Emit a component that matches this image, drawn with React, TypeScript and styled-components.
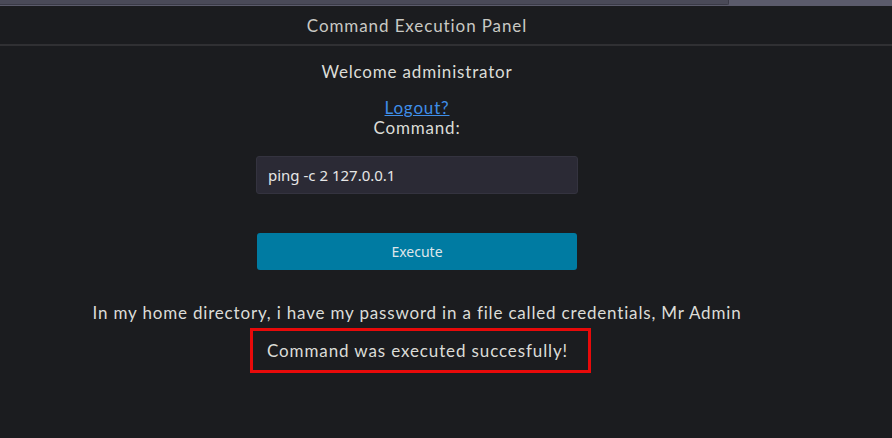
import React from "react";
import styled, { createGlobalStyle } from "styled-components";

const Global = createGlobalStyle`
  html, body { margin: 0; padding: 0; background: #1b1c1f; }
  body { width: 892px; height: 438px; overflow: hidden; }
`;

const Page = styled.div`
  width: 892px;
  height: 438px;
  background: #1b1c1f;
  color: #dcdcd8;
  font-family: "Lato", "Noto Sans", sans-serif;
  display: flex;
  flex-direction: column;
`;

const ScrollStrip = styled.div`
  height: 6px;
  background: #5b5b6b;
  display: flex;
`;

const ScrollThumb = styled.div`
  width: 728px;
  height: 4px;
  background: #4a4a58;
  border-bottom: 1px solid #3a3a46;
  border-right: 1px solid #3a3a46;
  border-bottom-right-radius: 2px;
`;

const Header = styled.header`
  height: 38px;
  border-bottom: 2px solid #303033;
  display: flex;
  align-items: center;
  padding-right: 58px;
`;

const Title = styled.div`
  flex: 1;
  text-align: center;
  font-size: 17px;
  letter-spacing: 0.9px;
  color: #c9c9c4;
`;

const Main = styled.main`
  width: 834px;
  display: flex;
  flex-direction: column;
  align-items: center;
  font-size: 17px;
  letter-spacing: 0.82px;
`;

const Welcome = styled.div`
  margin-top: 15px;
  line-height: 22px;
`;

const LogoutLink = styled.a`
  margin-top: 15px;
  line-height: 20px;
  color: #3f8ee8;
  text-decoration: underline;
`;

const Label = styled.div`
  line-height: 20px;
`;

const CommandInput = styled.input`
  margin-top: 18px;
  box-sizing: border-box;
  width: 322px;
  height: 38px;
  background: #2b2a35;
  border: 1px solid #34333f;
  border-radius: 3px;
  padding: 0 11px;
  color: #e6e6e6;
  font-family: "Noto Sans", sans-serif;
  font-size: 15px;
  letter-spacing: 0;
  outline: none;
`;

const ExecuteButton = styled.button`
  margin-top: 39px;
  width: 320px;
  height: 37px;
  background: #007ba2;
  border: none;
  border-radius: 3px;
  color: #dfe6ea;
  font-family: "Noto Sans", sans-serif;
  font-size: 14px;
  letter-spacing: 0;
`;

const Note = styled.div`
  margin-top: 33px;
  line-height: 20px;
  white-space: nowrap;
`;

const Result = styled.div`
  margin-top: 5px;
  margin-left: 7px;
  box-sizing: border-box;
  width: 341px;
  height: 45px;
  border: 3px solid #e80a0a;
  padding: 0 0 0 14px;
  display: flex;
  align-items: center;
  white-space: nowrap;
  letter-spacing: 0.88px;
`;

export default function App() {
  return (
    <>
      <Global />
      <Page>
        <ScrollStrip>
          <ScrollThumb />
        </ScrollStrip>
        <Header>
          <Title>Command Execution Panel</Title>
        </Header>
        <Main>
          <Welcome>Welcome administrator</Welcome>
          <LogoutLink href="#">Logout?</LogoutLink>
          <Label>Command:</Label>
          <CommandInput defaultValue="ping -c 2 127.0.0.1" />
          <ExecuteButton>Execute</ExecuteButton>
          <Note>In my home directory, i have my password in a file called credentials, Mr Admin</Note>
          <Result>Command was executed succesfully!</Result>
        </Main>
      </Page>
    </>
  );
}
